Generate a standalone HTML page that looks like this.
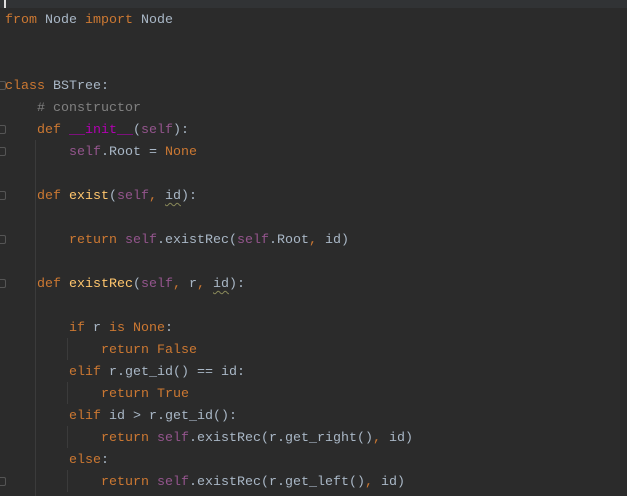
<!DOCTYPE html><html><head><style>
body{margin:0;width:627px;height:496px;background:#2b2b2b;overflow:hidden;position:relative;font-family:"Liberation Mono",monospace;font-size:13.33px;color:#a9b7c6}
.top{position:absolute;left:0;top:0;width:627px;height:8px;background:#313335}
.cur{position:absolute;left:4px;top:0;width:2px;height:8px;background:#ddd}
pre{margin:0;position:absolute;left:5px;top:10px;font:inherit;line-height:22px;white-space:pre}
.k{color:#cc7832}.s{color:#94558d}.c{color:#808080}.m{color:#b200b2}.f{color:#ffc66d}
.u{text-decoration:underline wavy #8a8a5a;text-underline-offset:3px;text-decoration-thickness:1px}
.g{position:absolute;width:1px;background:#3b3b3b}
.fold{position:absolute;left:0;width:5px;height:7px;border:1px solid #555;border-left:none;border-radius:0 2px 2px 0}
</style></head><body>
<div class="top"></div><div class="cur"></div>
<div class="g" style="left:35px;top:140px;height:356px"></div>
<div class="g" style="left:67px;top:338px;height:22px"></div>
<div class="g" style="left:67px;top:382px;height:22px"></div>
<div class="g" style="left:67px;top:426px;height:22px"></div>
<div class="g" style="left:67px;top:470px;height:22px"></div>
<div class="fold" style="top:81px"></div>
<div class="fold" style="top:125px"></div>
<div class="fold" style="top:147px"></div>
<div class="fold" style="top:191px"></div>
<div class="fold" style="top:235px"></div>
<div class="fold" style="top:279px"></div>
<div class="fold" style="top:477px"></div>
<pre><span class="k">from</span> Node <span class="k">import</span> Node


<span class="k">class</span> BSTree:
    <span class="c"># constructor</span>
    <span class="k">def</span> <span class="m">__init__</span>(<span class="s">self</span>):
        <span class="s">self</span>.Root = <span class="k">None</span>

    <span class="k">def</span> <span class="f">exist</span>(<span class="s">self</span><span class="k">,</span> <span class="u">id</span>):

        <span class="k">return</span> <span class="s">self</span>.existRec(<span class="s">self</span>.Root<span class="k">,</span> id)

    <span class="k">def</span> <span class="f">existRec</span>(<span class="s">self</span><span class="k">,</span> r<span class="k">,</span> <span class="u">id</span>):

        <span class="k">if</span> r <span class="k">is</span> <span class="k">None</span>:
            <span class="k">return</span> <span class="k">False</span>
        <span class="k">elif</span> r.get_id() == id:
            <span class="k">return</span> <span class="k">True</span>
        <span class="k">elif</span> id &gt; r.get_id():
            <span class="k">return</span> <span class="s">self</span>.existRec(r.get_right()<span class="k">,</span> id)
        <span class="k">else</span>:
            <span class="k">return</span> <span class="s">self</span>.existRec(r.get_left()<span class="k">,</span> id)</pre>
</body></html>
